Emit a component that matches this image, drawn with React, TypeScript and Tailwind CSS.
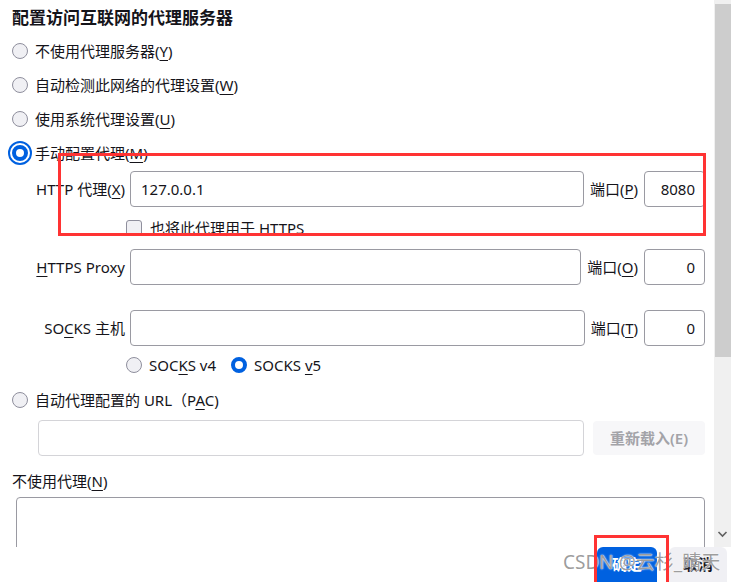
import React from "react";

const font = { fontFamily: '"Noto Sans", "Noto Sans CJK SC", sans-serif' };

function Radio({ checked = false, focus = false }: { checked?: boolean; focus?: boolean }) {
  if (checked) {
    return (
      <span
        className={
          "flex h-[16px] w-[16px] shrink-0 items-center justify-center rounded-full border-[4px] border-[#0061e0] bg-white " +
          (focus ? "outline outline-2 outline-offset-[2px] outline-[#0061e0]" : "")
        }
      />
    );
  }
  return <span className="h-[16px] w-[16px] shrink-0 rounded-full border border-[#8f8f9d] bg-[#f0f0f4]" />;
}

function U({ children }: { children: React.ReactNode }) {
  return <span className="underline underline-offset-[3px]">{children}</span>;
}

function ProxyRow({
  label,
  value,
  portLabel,
  port,
}: {
  label: React.ReactNode;
  value?: string;
  portLabel: React.ReactNode;
  port: string;
}) {
  return (
    <div className="flex h-[36px] items-center pr-[9px]">
      <div className="w-[126px] shrink-0 pr-[1px] text-right">{label}</div>
      <div className="ml-[4px] flex h-[36px] flex-1 items-center rounded-[4px] border border-[#9a9aa2] pl-[10px]">
        {value}
      </div>
      <div className="mx-[6px] shrink-0">{portLabel}</div>
      <div className="flex h-[36px] w-[61px] shrink-0 items-center justify-end rounded-[4px] border border-[#9a9aa2] pr-[9px]">
        {port}
      </div>
    </div>
  );
}

export default function App() {
  return (
    <div className="relative h-[582px] w-[736px] overflow-hidden bg-white text-[15px] text-[#15141a]" style={font}>
      <div className="flex h-[547px]">
        <div className="h-[547px] w-[714px] overflow-hidden">
          <div className="mt-[8px] px-[12px] text-[17px] font-bold leading-[20px]">配置访问互联网的代理服务器</div>

          <div className="mt-[6px] flex h-[34px] items-center gap-[7px] pl-[12px]">
            <Radio />
            <span>不使用代理服务器(<U>Y</U>)</span>
          </div>
          <div className="flex h-[34px] items-center gap-[7px] pl-[12px]">
            <Radio />
            <span>自动检测此网络的代理设置(<U>W</U>)</span>
          </div>
          <div className="flex h-[34px] items-center gap-[7px] pl-[12px]">
            <Radio />
            <span>使用系统代理设置(<U>U</U>)</span>
          </div>
          <div className="flex h-[34px] items-center gap-[7px] pl-[12px]">
            <Radio checked focus />
            <span>手动配置代理(<U>M</U>)</span>
          </div>

          <div className="mt-[1px]">
            <ProxyRow
              label={<>HTTP 代理(<U>X</U>)</>}
              value="127.0.0.1"
              portLabel={<>端口(<U>P</U>)</>}
              port="8080"
            />
          </div>

          <div className="flex h-[42px] items-center gap-[8px] pl-[126px]">
            <span className="h-[16px] w-[16px] rounded-[3px] border border-[#8f8f9d] bg-[#f0f0f4]" />
            <span>也将此代理用于 HTTPS</span>
          </div>

          <ProxyRow label={<><U>H</U>TTPS Proxy</>} portLabel={<>端口(<U>O</U>)</>} port="0" />

          <div className="mt-[25px]">
            <ProxyRow label={<>SO<U>C</U>KS 主机</>} portLabel={<>端口(<U>T</U>)</>} port="0" />
          </div>

          <div className="flex h-[38px] items-center pl-[126px]">
            <Radio />
            <span className="ml-[7px]">SOC<U>K</U>S v4</span>
            <span className="ml-[15px]">
              <Radio checked />
            </span>
            <span className="ml-[7px]">SOCKS <U>v</U>5</span>
          </div>

          <div className="flex h-[32px] items-center gap-[7px] pl-[12px]">
            <Radio />
            <span>自动代理配置的 URL（P<U>A</U>C)</span>
          </div>

          <div className="mt-[4px] flex items-center pr-[9px]">
            <div className="ml-[38px] h-[36px] flex-1 rounded-[4px] border border-[#d4d4d8]" />
            <div className="ml-[9px] flex h-[34px] w-[112px] items-center justify-center rounded-[4px] bg-[#f7f7f9] font-semibold text-[#a3a3a8]">
              重新载入(E)
            </div>
          </div>

          <div className="mt-[13px] pl-[12px] leading-[24px]">
            不使用代理(<U>N</U>)
          </div>

          <div className="ml-[16px] mr-[9px] mt-[4px] h-[90px] rounded-[4px] border border-[#9a9aa2]" />
        </div>

        <div className="relative h-[547px] w-[17px] bg-[#f0f0f0]">
          <div className="ml-[1px] mt-[4px] h-[353px] w-[16px] bg-[#cdcdcd]" />
          <svg className="absolute bottom-[9px] left-[3px]" width="11" height="8" viewBox="0 0 11 8">
            <path d="M1.5 2 L5.5 6 L9.5 2" fill="none" stroke="#606060" strokeWidth="1.6" />
          </svg>
        </div>
      </div>

      <div className="flex h-[35px] items-start justify-end gap-[12px] pr-[9px]">
        <div className="flex h-[40px] w-[60px] items-center justify-center rounded-[6px] bg-[#0061e0] pb-[5px] font-bold text-white">
          确定
        </div>
        <div className="flex h-[40px] w-[58px] items-center justify-center rounded-[6px] bg-[#f0f0f4] pb-[5px] font-bold">
          取消
        </div>
      </div>

      <div className="pointer-events-none absolute left-[563px] top-[550px] text-[19px] leading-[24px] text-[rgba(140,140,140,0.85)] [text-shadow:0_0_1px_#fff,0_0_2px_#fff]">
        CSDN @云杉_晴天
      </div>

      <div className="pointer-events-none absolute left-[58px] top-[153px] h-[83px] w-[648px] border-[3px] border-[#f33]" />
      <div className="pointer-events-none absolute left-[594px] top-[535px] h-[50px] w-[75px] border-[3px] border-[#f33]" />
    </div>
  );
}
